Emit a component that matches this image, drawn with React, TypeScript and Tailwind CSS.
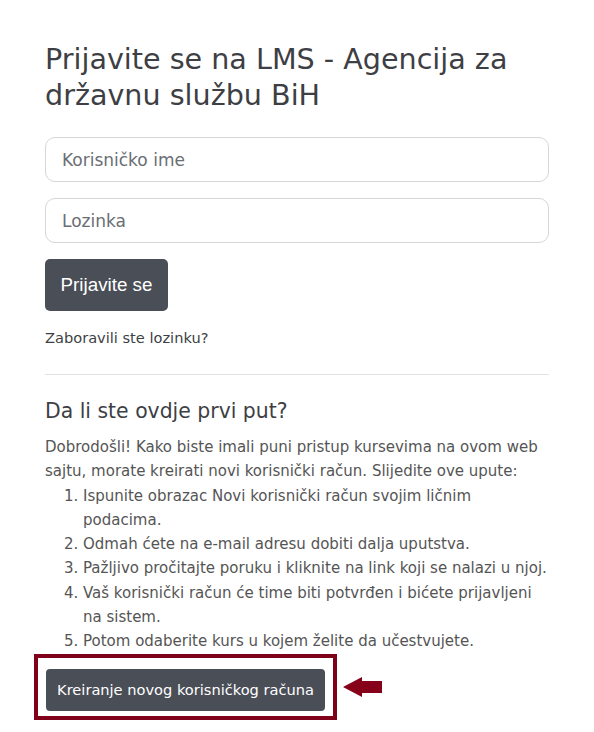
import React from "react";

const font = { fontFamily: '"DejaVu Sans", sans-serif' };

function ArrowLeft() {
  return (
    <svg width="40" height="22" viewBox="0 0 40 22" className="shrink-0">
      <path d="M0 11 L19 1 L19 5 L39 5 L39 17 L19 17 L19 21 Z" fill="#87001a" />
    </svg>
  );
}

export default function App() {
  return (
    <div className="min-h-screen bg-white font-['DejaVu_Sans',sans-serif]">
      <div className="w-[504px] ml-[45px] pt-[41px]">
        <h2 className="text-[28.6px] leading-[36px] text-[#3d3f44] font-normal">
          Prijavite se na LMS - Agencija za državnu službu BiH
        </h2>

        <form className="mt-[24px] flex flex-col gap-4" onSubmit={(e) => e.preventDefault()}>
          <input
            type="text"
            placeholder="Korisničko ime"
            className="h-[45px] w-full rounded-[10px] border border-[#d6d6d6] px-4 text-[17px] text-[#555] placeholder:text-[#6a6e73] outline-none"
          />
          <input
            type="password"
            placeholder="Lozinka"
            className="h-[45px] w-full rounded-[10px] border border-[#d6d6d6] px-4 text-[17px] text-[#555] placeholder:text-[#6a6e73] outline-none"
          />
          <div>
            <button
              type="submit"
              className="h-[52px] w-[123px] rounded-[5px] bg-[#4a4e57] text-[18.8px] text-white font-['Liberation_Sans',sans-serif]"
            >
              Prijavite se
            </button>
          </div>
        </form>

        <a href="#" className="mt-[16px] block text-[14.6px] leading-[22px] text-[#3d3f44]">
          Zaboravili ste lozinku?
        </a>

        <hr className="mt-[25px] border-t border-[#e2e2e2]" />

        <h3 className="mt-[22px] text-[20.4px] leading-[28px] text-[#3d3f44] font-normal">
          Da li ste ovdje prvi put?
        </h3>
        <div className="mt-[10px] text-[15px] leading-[24.3px] text-[#555]" style={font}>
          <p>
            Dobrodošli! Kako biste imali puni pristup kursevima na ovom web sajtu, morate kreirati novi
            korisnički račun. Slijedite ove upute:
          </p>
          <ol className="list-decimal pl-[38px]">
            <li>Ispunite obrazac Novi korisnički račun svojim ličnim podacima.</li>
            <li>Odmah ćete na e-mail adresu dobiti dalja uputstva.</li>
            <li>Pažljivo pročitajte poruku i kliknite na link koji se nalazi u njoj.</li>
            <li>Vaš korisnički račun će time biti potvrđen i bićete prijavljeni na sistem.</li>
            <li>Potom odaberite kurs u kojem želite da učestvujete.</li>
          </ol>
        </div>

        <div className="-ml-[11px] flex items-center gap-[6px]">
          <div className="border-[4px] border-[#7f0018] px-[8px] pt-[11px] pb-[5px]">
            <button
              type="button"
              className="h-[42px] w-[279px] rounded-[4px] bg-[#4a4e57] text-[14.6px] text-white"
            >
              Kreiranje novog korisničkog računa
            </button>
          </div>
          <ArrowLeft />
        </div>
      </div>
    </div>
  );
}
